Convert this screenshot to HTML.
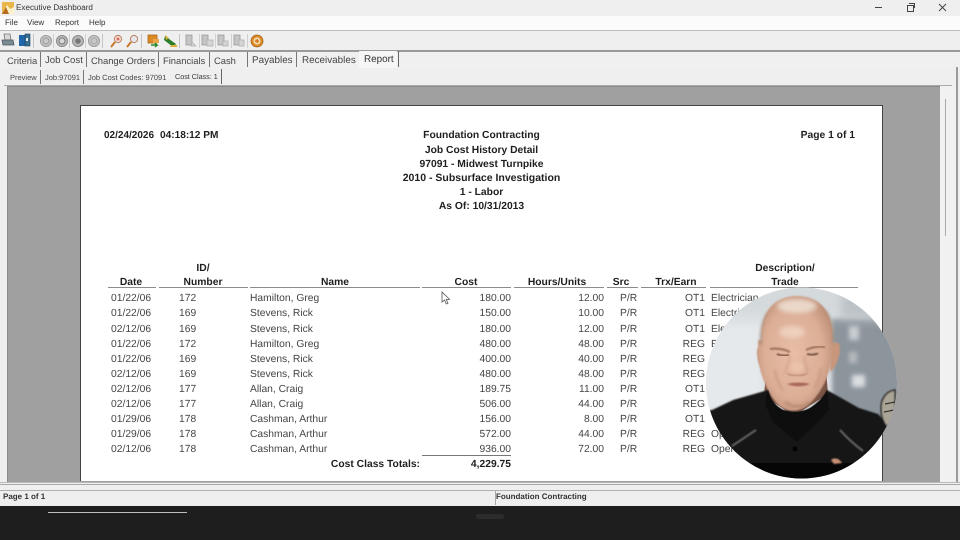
<!DOCTYPE html>
<html><head><meta charset="utf-8">
<style>
html,body{margin:0;padding:0;background:#1e1e1e}
#r{position:relative;width:960px;height:540px;overflow:hidden;background:#1e1e1e;font-family:"Liberation Sans",sans-serif;color:#222;text-rendering:geometricPrecision}
.a{position:absolute;white-space:nowrap}
.l{position:absolute}
.m{position:absolute;white-space:nowrap;font-size:8px;line-height:12px;top:17px;color:#333}
.t{position:absolute;white-space:nowrap;font-size:9.4px;line-height:13px;top:53.500px;color:#444}
.s{position:absolute;white-space:nowrap;font-size:7.5px;line-height:12px;top:72px;color:#444}
.b{font-weight:bold;color:#1f1f1f;font-size:10.3px;line-height:13px}
.c{text-align:center;position:absolute;white-space:nowrap;transform:translateX(-50%)}
.h{position:absolute;background:#8c8c8c;height:1px;top:287px}
.row{position:absolute;left:0;width:960px;height:14px;font-size:10.3px;color:#444;line-height:14px}
.row span{position:absolute;white-space:nowrap}
.d{left:111px}.i{left:179px}.n{left:250px}.co{right:449px}.hr{right:356px}.sr{left:620px}.tr{right:255px}.de{left:711px}
</style></head><body><div id="r">
<!-- window chrome -->
<div class="l" style="left:0;top:0;width:960px;height:506px;background:#efefef"></div>
<div class="l" style="left:0;top:16px;width:960px;height:14px;background:#fbfbfb"></div>
<div class="l" style="left:0;top:30px;width:960px;height:1px;background:#bdbdbd"></div>
<!-- title -->
<svg class="l" style="left:2px;top:2px" width="12" height="12" viewBox="0 0 12 12"><rect width="12" height="12" fill="#e8b64a"/><path d="M0 12L5 3l3 4 4-2v7z" fill="#fff2c8"/><path d="M0 12L4 5l3 7z" fill="#b76a1d"/></svg>
<div class="a" style="left:16px;top:2px;font-size:8.1px;line-height:12px;color:#333">Executive Dashboard</div>
<div class="m" style="left:5px">File</div>
<div class="m" style="left:27px">View</div>
<div class="m" style="left:55px">Report</div>
<div class="m" style="left:89px">Help</div>
<!-- window controls -->
<div class="l" style="left:875px;top:7px;width:7px;height:1px;background:#444"></div>
<div class="l" style="left:907px;top:5px;width:5px;height:5px;border:1px solid #444"></div>
<div class="l" style="left:909px;top:3px;width:5px;height:1px;background:#444"></div>
<div class="l" style="left:914px;top:3px;width:1px;height:5px;background:#444"></div>
<svg class="l" style="left:938px;top:3px" width="9" height="9" viewBox="0 0 9 9"><path d="M1 1l7 7M8 1L1 8" stroke="#444" stroke-width="1"/></svg>
<!-- toolbar icons -->
<svg class="l" style="left:0;top:31px" width="270" height="20" viewBox="0 0 270 20">
<path d="M4 3h6l1 6H5z" fill="#d8d8d8" stroke="#777" stroke-width=".8"/><path d="M2 9h11l1 5H3z" fill="#7c8a92" stroke="#4a5860" stroke-width=".8"/>
<rect x="19" y="4" width="6" height="11" fill="#2266aa"/><rect x="25" y="3" width="5" height="12" fill="#3a6f8f" stroke="#1c3f5e" stroke-width=".6"/><rect x="26" y="7" width="2" height="3" fill="#e6eef5"/>
<rect x="33" y="3" width="1" height="14" fill="#c4c4c4"/>
<g fill="none">
<circle cx="46" cy="10" r="5.5" fill="#c8c8c8" stroke="#999"/><circle cx="46" cy="10" r="3" stroke="#999"/>
<circle cx="62" cy="10" r="5.5" fill="#bcbcbc" stroke="#888"/><circle cx="62" cy="10" r="3" fill="#d9d9d9" stroke="#777"/>
<circle cx="78" cy="10" r="5.5" fill="#b8b8b8" stroke="#888"/><circle cx="78" cy="10" r="2.8" fill="#777"/>
<circle cx="94" cy="10" r="5.5" fill="#c8c8c8" stroke="#999"/><circle cx="94" cy="10" r="3" stroke="#a5a5a5"/>
</g>
<rect x="53" y="3" width="1" height="14" fill="#d0d0d0"/><rect x="69" y="3" width="1" height="14" fill="#d0d0d0"/><rect x="85" y="3" width="1" height="14" fill="#d0d0d0"/><rect x="102" y="3" width="1" height="14" fill="#c4c4c4"/>
<circle cx="118" cy="8" r="3.6" fill="#f2dcd2" stroke="#b98060"/><path d="M115 11l-4 5" stroke="#c8782a" stroke-width="2"/><path d="M116.500 8h3M118 6.500v3" stroke="#d04030" stroke-width="1"/>
<circle cx="134" cy="8" r="3.6" fill="#e5e6ea" stroke="#b98060"/><path d="M131 11l-4 5" stroke="#c8782a" stroke-width="2"/>
<rect x="141" y="3" width="1" height="14" fill="#c4c4c4"/>
<rect x="148" y="4" width="9" height="8" fill="#dd8a25" stroke="#a55f10" stroke-width=".7"/><rect x="153" y="8" width="6" height="4" fill="#e9a64b"/><path d="M151 14h6l-2-2m2 2l-2 2" stroke="#2a8a2a" stroke-width="1.500" fill="none"/>
<path d="M165 5l11 8-3 3-9-7z" fill="#2e7d2e"/><path d="M165 4l4 3-3 2z" fill="#d8b032"/><path d="M171 14h6v2h-7z" fill="#dfae3a"/>
<rect x="179" y="3" width="1" height="14" fill="#c4c4c4"/>
<g fill="#c5c5c5" stroke="#999" stroke-width=".8"><path d="M186 4h6v10h-6z"/><path d="M202 4h6v10h-6z"/><path d="M218 4h6v10h-6z"/><path d="M234 4h6v10h-6z"/></g>
<g fill="#d5d5d5" stroke="#aaa" stroke-width=".7"><path d="M192 11l4 4h-5z"/><rect x="207" y="9" width="6" height="6"/><rect x="223" y="10" width="5" height="5"/><rect x="239" y="9" width="5" height="6"/></g>
<rect x="199" y="3" width="1" height="14" fill="#d0d0d0"/><rect x="215" y="3" width="1" height="14" fill="#d0d0d0"/><rect x="231" y="3" width="1" height="14" fill="#d0d0d0"/><rect x="247" y="3" width="1" height="14" fill="#d0d0d0"/>
<circle cx="257" cy="10" r="6" fill="#d98a2a" stroke="#a96518" stroke-width=".8"/><circle cx="257" cy="10" r="3.600" fill="#f1d9a8"/><circle cx="257" cy="10" r="1.800" fill="#d9782a"/>
</svg>
<div class="l" style="left:0;top:50px;width:960px;height:2px;background:#9a9a9a"></div>
<!-- main tabs -->
<div class="l" style="left:0;top:52px;width:960px;height:16px;background:#f0f0f0"></div>
<div class="t" style="left:7px">Criteria</div>
<div class="l" style="left:40px;top:52px;width:1px;height:15px;background:#777"></div>
<div class="t" style="left:45px;font-size:9.600px">Job Cost</div>
<div class="l" style="left:86px;top:52px;width:1px;height:15px;background:#777"></div>
<div class="t" style="left:91px">Change Orders</div>
<div class="l" style="left:158px;top:52px;width:1px;height:15px;background:#777"></div>
<div class="t" style="left:163px">Financials</div>
<div class="l" style="left:209px;top:52px;width:1px;height:15px;background:#777"></div>
<div class="t" style="left:214px">Cash</div>
<div class="l" style="left:247px;top:52px;width:1px;height:15px;background:#777"></div>
<div class="t" style="left:252px;font-size:9.900px">Payables</div>
<div class="l" style="left:296px;top:52px;width:1px;height:15px;background:#777"></div>
<div class="t" style="left:302px;font-size:9.900px">Receivables</div>
<div class="l" style="left:359px;top:51px;width:38px;height:17px;background:#f6f6f6"></div>
<div class="t" style="left:364px;top:52.500px;font-size:9.900px;color:#333">Report</div>
<div class="l" style="left:398px;top:51px;width:1px;height:16px;background:#666"></div>
<!-- sub tabs -->
<div class="s" style="left:10px">Preview</div>
<div class="l" style="left:40px;top:70px;width:1px;height:14px;background:#777"></div>
<div class="s" style="left:45px">Job:97091</div>
<div class="l" style="left:83px;top:70px;width:1px;height:14px;background:#777"></div>
<div class="s" style="left:88px">Job Cost Codes: 97091</div>
<div class="s" style="left:175px;top:70.500px;font-size:7.200px;color:#333">Cost Class: 1</div>
<div class="l" style="left:221px;top:69px;width:1px;height:15px;background:#666"></div>
<!-- report viewport -->
<div class="l" style="left:7px;top:86px;width:933px;height:396px;background:#a0a0a0;border-top:1px solid #8a8a8a;border-left:1px solid #8a8a8a;box-sizing:border-box"></div>
<div class="l" style="left:940px;top:86px;width:15px;height:396px;background:#f1f1f1"></div>
<div class="l" style="left:945px;top:99px;width:1px;height:137px;background:#aaa"></div>
<div class="l" style="left:956px;top:67px;width:2px;height:416px;background:#9a9a9a"></div>
<div class="l" style="left:4px;top:85px;width:948px;height:1px;background:#aaa"></div>
<!-- paper -->
<div class="l" style="left:80px;top:105px;width:803px;height:376px;background:#fff;border:1px solid #444;border-bottom:0;box-sizing:border-box"></div>
<!-- header -->
<div class="a b" style="left:104px;top:128.500px;font-size:10px">02/24/2026</div>
<div class="a b" style="left:160px;top:128.500px;font-size:10.100px">04:18:12 PM</div>
<div class="a b" style="right:105px;top:128.500px">Page 1 of 1</div>
<div class="c b" style="left:481.500px;top:128.500px">Foundation Contracting</div>
<div class="c b" style="left:481.500px;top:143.500px">Job Cost History Detail</div>
<div class="c b" style="left:481.500px;top:158px">97091 - Midwest Turnpike</div>
<div class="c b" style="left:481.500px;top:171.500px;font-size:10.500px">2010 - Subsurface Investigation</div>
<div class="c b" style="left:481.500px;top:185.500px">1 - Labor</div>
<div class="c b" style="left:481.500px;top:200px">As Of: 10/31/2013</div>
<!-- columns -->
<div class="c b" style="left:131px;top:275.500px">Date</div>
<div class="c b" style="left:203px;top:261.500px">ID/</div>
<div class="c b" style="left:203px;top:275.500px">Number</div>
<div class="c b" style="left:335px;top:275.500px">Name</div>
<div class="c b" style="left:466px;top:275.500px">Cost</div>
<div class="c b" style="left:557px;top:275.500px">Hours/Units</div>
<div class="c b" style="left:621px;top:275.500px">Src</div>
<div class="c b" style="left:676px;top:275.500px">Trx/Earn</div>
<div class="c b" style="left:785px;top:261.500px">Description/</div>
<div class="c b" style="left:785px;top:275.500px">Trade</div>
<div class="h" style="left:108px;width:48px"></div>
<div class="h" style="left:159px;width:89px"></div>
<div class="h" style="left:250px;width:170px"></div>
<div class="h" style="left:422px;width:89px"></div>
<div class="h" style="left:514px;width:90px"></div>
<div class="h" style="left:607px;width:31px"></div>
<div class="h" style="left:641px;width:65px"></div>
<div class="h" style="left:710px;width:148px"></div>
<!-- rows -->
<div class="row" style="top:292px"><span class="d">01/22/06</span><span class="i">172</span><span class="n">Hamilton, Greg</span><span class="co">180.00</span><span class="hr">12.00</span><span class="sr">P/R</span><span class="tr">OT1</span><span class="de">Electrician</span></div>
<div class="row" style="top:307px"><span class="d">01/22/06</span><span class="i">169</span><span class="n">Stevens, Rick</span><span class="co">150.00</span><span class="hr">10.00</span><span class="sr">P/R</span><span class="tr">OT1</span><span class="de">Electrician</span></div>
<div class="row" style="top:323px"><span class="d">02/12/06</span><span class="i">169</span><span class="n">Stevens, Rick</span><span class="co">180.00</span><span class="hr">12.00</span><span class="sr">P/R</span><span class="tr">OT1</span><span class="de">Electrician</span></div>
<div class="row" style="top:338px"><span class="d">01/22/06</span><span class="i">172</span><span class="n">Hamilton, Greg</span><span class="co">480.00</span><span class="hr">48.00</span><span class="sr">P/R</span><span class="tr">REG</span><span class="de">Electrician</span></div>
<div class="row" style="top:353px"><span class="d">01/22/06</span><span class="i">169</span><span class="n">Stevens, Rick</span><span class="co">400.00</span><span class="hr">40.00</span><span class="sr">P/R</span><span class="tr">REG</span></div>
<div class="row" style="top:368px"><span class="d">02/12/06</span><span class="i">169</span><span class="n">Stevens, Rick</span><span class="co">480.00</span><span class="hr">48.00</span><span class="sr">P/R</span><span class="tr">REG</span></div>
<div class="row" style="top:383px"><span class="d">02/12/06</span><span class="i">177</span><span class="n">Allan, Craig</span><span class="co">189.75</span><span class="hr">11.00</span><span class="sr">P/R</span><span class="tr">OT1</span></div>
<div class="row" style="top:398px"><span class="d">02/12/06</span><span class="i">177</span><span class="n">Allan, Craig</span><span class="co">506.00</span><span class="hr">44.00</span><span class="sr">P/R</span><span class="tr">REG</span></div>
<div class="row" style="top:413px"><span class="d">01/29/06</span><span class="i">178</span><span class="n">Cashman, Arthur</span><span class="co">156.00</span><span class="hr">8.00</span><span class="sr">P/R</span><span class="tr">OT1</span></div>
<div class="row" style="top:428px"><span class="d">01/29/06</span><span class="i">178</span><span class="n">Cashman, Arthur</span><span class="co">572.00</span><span class="hr">44.00</span><span class="sr">P/R</span><span class="tr">REG</span><span class="de">Operator</span></div>
<div class="row" style="top:443px"><span class="d">02/12/06</span><span class="i">178</span><span class="n">Cashman, Arthur</span><span class="co">936.00</span><span class="hr">72.00</span><span class="sr">P/R</span><span class="tr">REG</span><span class="de">Operator</span></div>
<div class="l" style="left:422px;top:455px;width:89px;height:1px;background:#777"></div>
<div class="a b" style="right:540px;top:457.500px">Cost Class Totals:</div>
<div class="a b" style="right:449px;top:457.500px">4,229.75</div>
<!-- cursor -->
<svg class="l" style="left:441px;top:291px" width="10" height="15" viewBox="0 0 10 15"><path d="M1 1v10l2.500-2 1.800 4 1.700-.8-1.800-3.800H8.500z" fill="#fff" stroke="#555" stroke-width=".8"/></svg>
<!-- webcam -->
<svg class="l" style="left:700px;top:282px" width="204" height="204" viewBox="0 0 204 204">
<defs>
<clipPath id="cc"><circle cx="101.500" cy="101" r="95.500"/></clipPath>
<filter id="f6" x="-30%" y="-30%" width="160%" height="160%"><feGaussianBlur stdDeviation="5"/></filter>
<filter id="f3" x="-30%" y="-30%" width="160%" height="160%"><feGaussianBlur stdDeviation="2.500"/></filter>
<filter id="f1" x="-30%" y="-30%" width="160%" height="160%"><feGaussianBlur stdDeviation="1.200"/></filter>
<filter id="f08" x="-10%" y="-10%" width="120%" height="120%"><feGaussianBlur stdDeviation=".7"/></filter>
<radialGradient id="sk" cx=".47" cy=".5" r=".6"><stop offset="0" stop-color="#e8bea6"/><stop offset=".65" stop-color="#dcae96"/><stop offset="1" stop-color="#b98a72"/></radialGradient>
</defs>
<g clip-path="url(#cc)">
<rect width="204" height="204" fill="#dfe3e7"/>
<g filter="url(#f3)">
<path d="M132 36h72v105h-72z" fill="#8c949c"/>
<path d="M0 45h60v80H0z" fill="#e6e9ec"/>
</g>
<path d="M30 0h110v34H30z" fill="#d4d9dc" filter="url(#f6)"/>
<path d="M140 10h64v28h-64z" fill="#bcc2c7" filter="url(#f6)"/>
<g filter="url(#f3)"><rect x="149" y="44" width="10" height="14" fill="#c8cdd2"/><rect x="149" y="70" width="8" height="11" fill="#b6bbc0"/><rect x="152" y="93" width="13" height="12" fill="#dcdfe2"/></g>
<!-- neck fill -->
<path d="M66 90l-2 24 30 20 34-22-2-26z" fill="#7a5444"/>
<!-- ears -->
<path d="M63 65c-3-2-6 0-6 5 0 8 3 20 9 22zM131 62c4-3 9-2 9 4 0 8-4 20-10 24z" fill="#c8967a" filter="url(#f08)"/>
<!-- head -->
<path d="M61 58C60 30 74 14 97 14s37 16 36 44c0 10-1 18-3 27-2 9-5 16-10 24-6 9-13 17-22 19-8 2-17-1-23-9-7-9-11-19-14-28-2-8-3-21-3-33z" fill="url(#sk)" filter="url(#f08)"/>
<ellipse cx="97" cy="24" rx="20" ry="7" fill="#efe3d8" opacity=".8" filter="url(#f3)"/>
<ellipse cx="92" cy="50" rx="13" ry="6" fill="#f1d9c8" opacity=".75" filter="url(#f3)"/>
<path d="M62 62c-2-12 0-24 7-34-8 8-10 22-9 35zM132 60c2-12 0-24-7-34 8 8 10 22 9 35z" fill="#93806f" opacity=".8" filter="url(#f1)"/>
<!-- features -->
<path d="M70 67c7-1 14 0 20 3M106 68c6-3 13-4 19-3" stroke="#9b6e58" stroke-width="2" fill="none" filter="url(#f08)"/>
<path d="M77 72c4 2 8 2 12 1M107 72c4 1 8 1 11-1" stroke="#6a4738" stroke-width="1.700" fill="none" filter="url(#f08)"/>
<path d="M90 74c-1 6-4 12-5 17M104 74c1 6 3 12 4 17" stroke="#b98570" stroke-width="1.500" fill="none" opacity=".5" filter="url(#f1)"/>
<path d="M86 90c4 4 18 4 22 0-2 4-5 4-11 4s-9 0-11-4z" fill="#a9705a" opacity=".8" filter="url(#f08)"/>
<ellipse cx="97" cy="85" rx="6" ry="5" fill="#edc7b0" opacity=".7" filter="url(#f1)"/>
<path d="M87 102c6-2 17-2 23 0-6 3-17 3-23 0z" fill="#a9685a" filter="url(#f08)"/>
<path d="M75 88c1 8 4 15 8 21M121 86c-1 8-3 14-7 20" stroke="#b9846c" stroke-width="2" fill="none" opacity=".5" filter="url(#f1)"/>
<path d="M85 120c7 6 18 6 25 0" stroke="#a87860" stroke-width="3" fill="none" opacity=".5" filter="url(#f1)"/>
<!-- shirt -->
<path d="M0 204V130l12-2 21-10 35-10c2 9 7 16 15 20 9 3 21 3 30-4 6-5 11-10 14-16l32 18 19 6 7 7 19 10v55z" fill="#171717" filter="url(#f08)"/>
<path d="M68 108l-3 14 8 18 24 20 19-18 13-14-2-20c-3 7-8 12-14 16-9 7-21 7-30 4-8-4-13-11-15-20z" fill="#0e0e0e"/>
<path d="M32 164l24-16M140 148c7 8 15 15 23 21" stroke="#6d6d6d" stroke-width="1.800" fill="none" filter="url(#f08)"/>
<circle cx="95" cy="167" r="2.500" fill="#030303"/>
<rect x="50" y="181" width="104" height="24" fill="#060606"/>
<path d="M52 181h98" stroke="#a8a8a8" stroke-width="1.100" filter="url(#f08)"/>
<path d="M131 178c3-3 8-2 11 3l-8 1z" fill="#c68f75" filter="url(#f08)"/>
<!-- microphone -->
<path d="M181 126c0-10 6-17 14-18v26c-2 5-5 9-8 11-4-5-6-11-6-19z" fill="#a9a495" stroke="#1c1c1c" stroke-width="1.500" filter="url(#f08)"/>
<path d="M185 122l10-2M184 130l10-2" stroke="#333" stroke-width="1.200"/>
</g>
</svg>
<!-- status -->
<div class="l" style="left:0;top:482px;width:960px;height:1px;background:#b8b8b8"></div>
<div class="l" style="left:0;top:484px;width:960px;height:1px;background:#a8a8a8"></div>
<div class="l" style="left:0;top:490px;width:960px;height:1px;background:#b0b0b0"></div>
<div class="l" style="left:495px;top:491px;width:1px;height:14px;background:#a8a8a8"></div>
<div class="a" style="left:3px;top:491px;font-size:8px;font-weight:bold;line-height:12px;color:#333">Page 1 of 1</div>
<div class="a" style="left:496px;top:491px;font-size:8px;font-weight:bold;line-height:12px;color:#333">Foundation Contracting</div>
<!-- bottom -->
<div class="l" style="left:48px;top:512px;width:139px;height:1px;background:#bdbdbd"></div>
<div class="l" style="left:476px;top:514px;width:28px;height:5px;background:#2c2c2c;border-radius:2px"></div>
</div></body></html>
